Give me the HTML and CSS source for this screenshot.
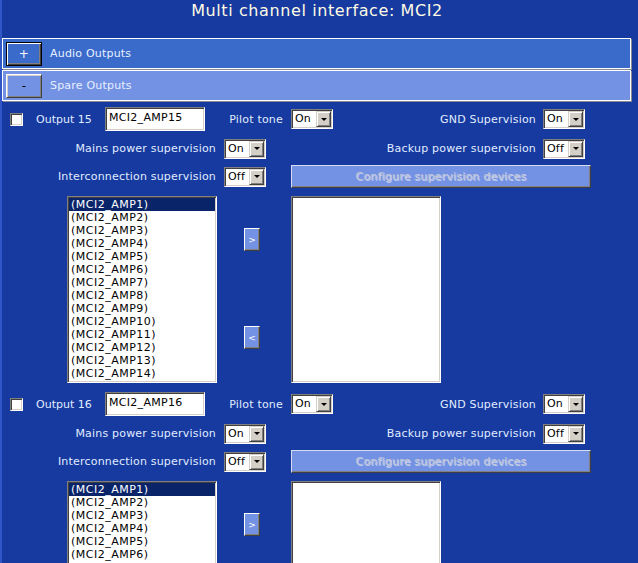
FILE: index.html
```html
<!DOCTYPE html>
<html>
<head>
<meta charset="utf-8">
<title>Multi channel interface: MCI2</title>
<link rel="stylesheet" href="styles.css">
</head>
<body>
<div class="page">
  <h1 class="title">Multi channel interface: MCI2</h1>
  <div class="bar bar-audio"><span class="tbtn tbtn-default">+</span><span class="bar-label">Audio Outputs</span></div>
  <div class="bar bar-spare"><span class="tbtn tbtn-minus">-</span><span class="bar-label">Spare Outputs</span></div>

  <div class="block">
    <div class="row r1">
      <span class="chk"></span>
      <span class="out-label">Output 15</span>
      <span class="txt">MCI2_AMP15</span>
      <span class="lbl pilot">Pilot tone</span>
      <span class="sel"><span class="val">On</span><span class="arr"></span></span>
      <span class="lbl gnd">GND Supervision</span>
      <span class="sel sel-r"><span class="val">On</span><span class="arr"></span></span>
    </div>
    <div class="row r2">
      <span class="lbl lbl-left">Mains power supervision</span>
      <span class="sel"><span class="val">On</span><span class="arr"></span></span>
      <span class="lbl backup">Backup power supervision</span>
      <span class="sel sel-r"><span class="val">Off</span><span class="arr"></span></span>
    </div>
    <div class="row r3">
      <span class="lbl lbl-left">Interconnection supervision</span>
      <span class="sel"><span class="val">Off</span><span class="arr"></span></span>
      <span class="cfg">Configure supervision devices</span>
    </div>
    <div class="lists">
      <div class="listbox">
        <div class="opt opt-on">(MCI2_AMP1)</div>
        <div class="opt">(MCI2_AMP2)</div>
        <div class="opt">(MCI2_AMP3)</div>
        <div class="opt">(MCI2_AMP4)</div>
        <div class="opt">(MCI2_AMP5)</div>
        <div class="opt">(MCI2_AMP6)</div>
        <div class="opt">(MCI2_AMP7)</div>
        <div class="opt">(MCI2_AMP8)</div>
        <div class="opt">(MCI2_AMP9)</div>
        <div class="opt">(MCI2_AMP10)</div>
        <div class="opt">(MCI2_AMP11)</div>
        <div class="opt">(MCI2_AMP12)</div>
        <div class="opt">(MCI2_AMP13)</div>
        <div class="opt">(MCI2_AMP14)</div>
      </div>
      <div class="movers">
        <span class="mv mv-add">&gt;</span>
        <span class="mv mv-rem">&lt;</span>
      </div>
      <div class="listbox"></div>
    </div>
  </div>

  <div class="block">
    <div class="row r1">
      <span class="chk"></span>
      <span class="out-label">Output 16</span>
      <span class="txt">MCI2_AMP16</span>
      <span class="lbl pilot">Pilot tone</span>
      <span class="sel"><span class="val">On</span><span class="arr"></span></span>
      <span class="lbl gnd">GND Supervision</span>
      <span class="sel sel-r"><span class="val">On</span><span class="arr"></span></span>
    </div>
    <div class="row r2">
      <span class="lbl lbl-left">Mains power supervision</span>
      <span class="sel"><span class="val">On</span><span class="arr"></span></span>
      <span class="lbl backup">Backup power supervision</span>
      <span class="sel sel-r"><span class="val">Off</span><span class="arr"></span></span>
    </div>
    <div class="row r3">
      <span class="lbl lbl-left">Interconnection supervision</span>
      <span class="sel"><span class="val">Off</span><span class="arr"></span></span>
      <span class="cfg">Configure supervision devices</span>
    </div>
    <div class="lists">
      <div class="listbox">
        <div class="opt opt-on">(MCI2_AMP1)</div>
        <div class="opt">(MCI2_AMP2)</div>
        <div class="opt">(MCI2_AMP3)</div>
        <div class="opt">(MCI2_AMP4)</div>
        <div class="opt">(MCI2_AMP5)</div>
        <div class="opt">(MCI2_AMP6)</div>
        <div class="opt">(MCI2_AMP7)</div>
        <div class="opt">(MCI2_AMP8)</div>
        <div class="opt">(MCI2_AMP9)</div>
        <div class="opt">(MCI2_AMP10)</div>
        <div class="opt">(MCI2_AMP11)</div>
        <div class="opt">(MCI2_AMP12)</div>
        <div class="opt">(MCI2_AMP13)</div>
        <div class="opt">(MCI2_AMP14)</div>
      </div>
      <div class="movers">
        <span class="mv mv-add">&gt;</span>
        <span class="mv mv-rem">&lt;</span>
      </div>
      <div class="listbox"></div>
    </div>
  </div>
</div>
</body>
</html>
```
FILE: styles.css
```css
html, body {
  margin: 0;
  padding: 0;
  background: #163a9f;
}
body {
  font-family: "DejaVu Sans", Verdana, sans-serif;
  font-size: 11px;
  color: #e0ecff;
}
.page {
  width: 630px;
  border-left: 2px solid #3157c6;
  min-height: 100vh;
}
.title {
  margin: 0;
  height: 38px;
  padding-top: 1px;
  box-sizing: border-box;
  font-size: 16px;
  line-height: 19px;
  font-weight: normal;
  text-align: center;
  letter-spacing: 0.6px;
  color: #fffbe6;
}
.bar {
  width: 629px;
  height: 31px;
  box-sizing: border-box;
  border: 1px solid #fff;
  box-shadow: 1px 1px 0 #8a8a96;
  display: flex;
  align-items: center;
  margin-bottom: 1px;
  color: #e8f0ff;
  letter-spacing: 0.2px;
}
.bar-audio { background: #3a6bcb; }
.bar-spare { background: #7492e3; margin-bottom: 3px; }
.tbtn {
  width: 36px;
  height: 24px;
  box-sizing: border-box;
  margin-left: 3px;
  display: flex;
  align-items: center;
  justify-content: center;
  font-size: 12px;
}
.tbtn-default {
  background: #3a6bcb;
  border: 1px solid #000;
  box-shadow: inset 1px 1px 0 #fff, inset -1px -1px 0 #404040, inset -2px -2px 0 #808080;
  color: #fff;
}
.tbtn-minus {
  background: #7492e3;
  border: 1px solid;
  border-color: #fff #404040 #404040 #fff;
  box-shadow: inset 1px 1px 0 #d4d0c8, inset -1px -1px 0 #808080;
  color: #000;
}
.bar-label { margin-left: 8px; }

.block {
  display: flex;
  flex-direction: column;
  padding-bottom: 6px;
}
.row {
  display: flex;
  align-items: center;
  white-space: nowrap;
}
.r1 { height: 30px; }
.r2 { height: 29px; }
.r3 { height: 27px; }

.chk {
  width: 13px;
  height: 13px;
  box-sizing: border-box;
  margin-left: 8px;
  background: #fff;
  border: 1px solid;
  border-color: #808080 #fff #fff #808080;
  box-shadow: inset 1px 1px 0 #404040, inset -1px -1px 0 #d4d0c8;
}
.out-label {
  width: 69px;
  margin-left: 13px;
}
.txt {
  width: 100px;
  height: 24px;
  box-sizing: border-box;
  background: #fff;
  color: #000;
  border: 1px solid;
  border-color: #808080 #fff #fff #808080;
  box-shadow: inset 1px 1px 0 #404040, inset -1px -1px 0 #d4d0c8;
  padding: 3px 0 0 3px;
  line-height: 13px;
  letter-spacing: 0.3px;
}
.lbl {
  text-align: right;
  letter-spacing: 0.2px;
}
.pilot { width: 78px; }
.gnd { width: 203px; }
.lbl-left { width: 214px; }
.backup { width: 270px; }

.sel {
  display: flex;
  width: 42px;
  height: 20px;
  box-sizing: border-box;
  margin-left: 8px;
  padding: 1px;
  background: #fff;
  color: #000;
  border: 1px solid;
  border-color: #808080 #fff #fff #808080;
  box-shadow: inset 1px 1px 0 #404040, inset -1px -1px 0 #d4d0c8;
}
.sel-r { margin-left: 7px; }
.val {
  flex: 1;
  padding-left: 2px;
  line-height: 16px;
  letter-spacing: 0.2px;
}
.arr {
  width: 15px;
  height: 16px;
  box-sizing: border-box;
  background: #d4d0c8;
  border: 1px solid;
  border-color: #d4d0c8 #404040 #404040 #d4d0c8;
  box-shadow: inset 1px 1px 0 #fff, inset -1px -1px 0 #808080;
  display: flex;
  align-items: center;
  justify-content: center;
}
.arr::after {
  content: "";
  width: 0;
  height: 0;
  border-left: 3px solid transparent;
  border-right: 3px solid transparent;
  border-top: 3px solid #000;
}

.cfg {
  width: 300px;
  height: 23px;
  box-sizing: border-box;
  margin-left: 25px;
  background: #7492e3;
  border: 1px solid;
  border-color: #d8dcf0 #404040 #404040 #d8dcf0;
  box-shadow: inset -1px -1px 0 #808080;
  display: flex;
  align-items: center;
  justify-content: center;
  color: #c6c9d6;
  text-shadow: 1px 1px 0 rgba(255, 255, 255, 0.55);
  letter-spacing: 0.2px;
}

.lists {
  display: flex;
  margin-top: 6px;
  margin-left: 65px;
}
.listbox {
  width: 150px;
  height: 187px;
  box-sizing: border-box;
  padding: 1px;
  overflow: hidden;
  background: #fff;
  border: 1px solid;
  border-color: #808080 #fff #fff #808080;
  box-shadow: inset 1px 1px 0 #404040, inset -1px -1px 0 #d4d0c8;
}
.opt {
  height: 13px;
  line-height: 13px;
  padding-left: 2px;
  color: #000;
  letter-spacing: 0.5px;
  white-space: nowrap;
}
.opt-on {
  background: #0a246a;
  color: #fff;
}
.movers {
  width: 74px;
  box-sizing: border-box;
  padding-left: 27px;
  display: flex;
  flex-direction: column;
  align-items: flex-start;
}
.mv {
  width: 16px;
  height: 23px;
  box-sizing: border-box;
  background: #7492e3;
  border: 1px solid;
  border-color: #fff #404040 #404040 #fff;
  box-shadow: inset -1px -1px 0 #808080;
  display: flex;
  align-items: center;
  justify-content: center;
  color: #fff;
  font-size: 9px;
}
.mv-add { margin-top: 32px; }
.mv-rem { margin-top: 75px; }
```
